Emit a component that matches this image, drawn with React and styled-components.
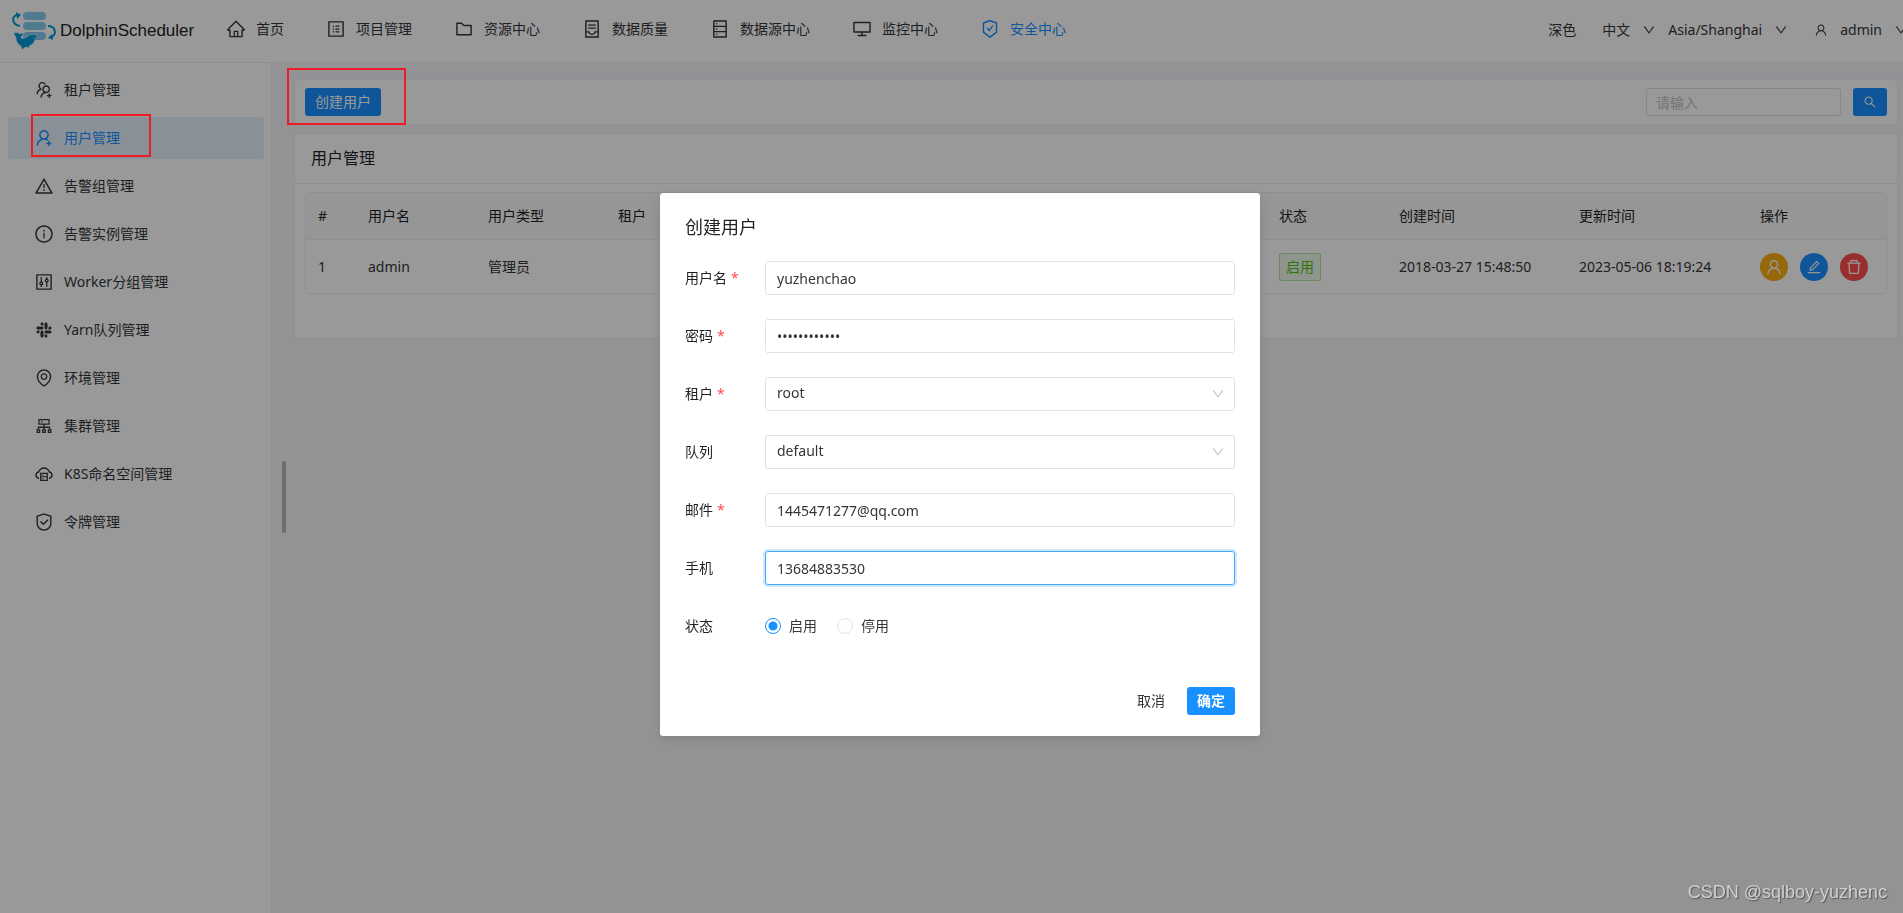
import React, { useState } from 'react';
import styled, { createGlobalStyle, css } from 'styled-components';
import {
   AiOutlineHome,
   AiOutlineProfile,
   AiOutlineFolder,
   AiOutlineContainer,
   AiOutlineDatabase,
   AiOutlineDesktop,
   AiOutlineSafetyCertificate,
   AiOutlineUsergroupAdd,
   AiOutlineUserAdd,
   AiOutlineWarning,
   AiOutlineInfoCircle,
   AiOutlineControl,
   AiOutlineSlack,
   AiOutlineEnvironment,
   AiOutlineCluster,
   AiOutlineCloudServer,
   AiOutlineSafety,
   AiOutlineDown,
   AiOutlineUser,
   AiOutlineEdit,
   AiOutlineDelete,
   AiOutlineSearch
} from 'react-icons/ai';

const colors = {
   primary: '#1890ff',
   text: '#333639',
   title: '#1f2225',
   border: '#e0e0e6',
   divider: '#efeff5',
   marker: '#ed1c24'
};

const GlobalStyle = createGlobalStyle`
   * {
      box-sizing: border-box;
   }

   body {
      margin: 0;
      overflow: hidden;
      color: ${colors.text};
      font-family: "Noto Sans", "Noto Sans CJK SC", sans-serif;
      font-size: 14px;
      line-height: 22px;
   }

   button, input, select {
      font: inherit;
      color: inherit;
   }

   a {
      color: inherit;
      text-decoration: none;
   }

   svg {
      display: block;
      flex-shrink: 0;
   }
`;

const Page = styled.div`
   display: flex;
   flex-direction: column;
   min-height: 100vh;
`;

const Header = styled.header`
   display: flex;
   align-items: center;
   height: 63px;
   padding-bottom: 4px;
   overflow: hidden;
   border-bottom: 1px solid ${colors.divider};
   background: #fff;
`;

const Logo = styled.a`
   display: flex;
   align-items: center;
   gap: 3px;
   width: 226px;
   padding: 3px 0 0 12px;
   flex-shrink: 0;
   color: #222;
   font-family: "Liberation Sans", Arial, sans-serif;
   font-size: 17px;
`;

const Nav = styled.nav`
   display: flex;
   gap: 42px;
`;

const NavLink = styled.a`
   display: flex;
   align-items: center;
   gap: 10px;
   white-space: nowrap;
   ${(props) => props.$active && css`color: ${colors.primary};`}
`;

const Tools = styled.div`
   display: flex;
   align-items: center;
   gap: 12px;
   margin: 2px -5px 0 auto;
`;

const ToolButton = styled.button`
   display: flex;
   align-items: center;
   gap: 12px;
   padding: 0;
   border: 0;
   background: none;
   white-space: nowrap;
   ${(props) => props.$spaced && css`margin-right: 14px;`}
`;

const Body = styled.div`
   display: flex;
   flex: 1;
`;

const Sidebar = styled.nav`
   width: 272px;
   flex-shrink: 0;
   padding: 6px 7px 6px 8px;
   border-right: 1px solid ${colors.divider};
   background: #fff;
`;

const SideLink = styled.a`
   position: relative;
   display: flex;
   align-items: center;
   gap: 10px;
   height: 42px;
   margin-bottom: 6px;
   padding-left: 26px;
   border-radius: 3px;
   ${(props) => props.$active && css`
      color: ${colors.primary};
      background: #e6f1fc;
   `}
`;

const Marker = styled.span`
   position: absolute;
   z-index: 20;
   border: 2px solid ${colors.marker};
   pointer-events: none;
`;

const SideMarker = styled(Marker)`
   inset: -3px 113px 2px 23px;
`;

const ButtonMarker = styled(Marker)`
   inset: -20px -25px -9px -18px;
`;

const Main = styled.main`
   position: relative;
   flex: 1;
   min-width: 0;
   padding: 16px 5px 16px 22px;
   background: #f6f6fa;
`;

const ScrollThumb = styled.span`
   position: absolute;
   top: 398px;
   left: 10px;
   width: 4px;
   height: 72px;
   border-radius: 4px;
   background: rgba(0, 0, 0, 0.25);
`;

const Card = styled.section`
   border: 1px solid ${colors.divider};
   border-radius: 3px;
   background: #fff;
`;

const Toolbar = styled(Card)`
   display: flex;
   align-items: center;
   justify-content: space-between;
   margin-bottom: 8px;
   padding: 8px 10px;
`;

const Anchor = styled.div`
   position: relative;
`;

const Button = styled.button`
   display: flex;
   align-items: center;
   justify-content: center;
   height: 28px;
   padding: 0 10px;
   border: 0;
   border-radius: 3px;
   background: none;
   ${(props) => props.$primary && css`
      color: #fff;
      background: ${colors.primary};
   `}
   ${(props) => props.$strong && css`font-weight: 700;`}
`;

const SearchForm = styled.form`
   display: flex;
   gap: 12px;
`;

const inputCss = css`
   width: 100%;
   height: 34px;
   padding: 0 11px;
   border: 1px solid ${colors.border};
   border-radius: 3px;
   outline: none;
   background: #fff;
`;

const Input = styled.input`
   ${inputCss}
   ${(props) => props.$focused && css`
      border-color: #46a6ff;
      box-shadow: 0 0 0 2px rgba(24, 144, 255, 0.2);
   `}
`;

const SearchInput = styled.input`
   ${inputCss}
   width: 195px;
   height: 28px;
   padding: 0 9px;

   &::placeholder {
      color: #c2c2c2;
   }
`;

const CardTitle = styled.h2`
   margin: 0;
   padding: 12px 16px;
   border-bottom: 1px solid ${colors.divider};
   color: ${colors.title};
   font-size: 16px;
   font-weight: 400;
   line-height: 25px;
`;

const CardContent = styled.div`
   padding: 8px 10px 44px;
`;

const Table = styled.table`
   width: 100%;
   table-layout: fixed;
   border: 1px solid ${colors.divider};
   border-radius: 3px;
   border-spacing: 0;
`;

const HeadCell = styled.th`
   width: ${(props) => props.$width || 'auto'};
   height: 47px;
   padding: 0 12px;
   border-bottom: 1px solid ${colors.divider};
   color: ${colors.title};
   background: #fafafc;
   font-weight: 400;
   text-align: left;
`;

const Cell = styled.td`
   height: 53px;
   padding: 0 12px;
   white-space: nowrap;
`;

const Tag = styled.span`
   display: flex;
   align-items: center;
   width: fit-content;
   height: 28px;
   padding: 0 6px;
   border: 1px solid #b3e59c;
   border-radius: 2px;
   color: #52c41a;
   background: #edf9e8;
`;

const Actions = styled.div`
   display: flex;
   gap: 12px;
`;

const RoundButton = styled.button`
   display: flex;
   align-items: center;
   justify-content: center;
   width: 28px;
   height: 28px;
   padding: 0;
   border: 0;
   border-radius: 50%;
   color: #fff;
   background: ${(props) => props.$color};
`;

const Mask = styled.div`
   position: fixed;
   inset: 0;
   z-index: 10;
   display: flex;
   align-items: center;
   justify-content: center;
   padding: 16px 0 0 17px;
   background: rgba(0, 0, 0, 0.4);
`;

const Modal = styled.form`
   width: 600px;
   padding: 20px 25px 21px;
   border-radius: 3px;
   background: #fff;
   box-shadow: 0 3px 12px rgba(0, 0, 0, 0.1), 0 6px 20px 4px rgba(0, 0, 0, 0.03);
`;

const ModalTitle = styled.h1`
   margin: 0 0 20px;
   color: ${colors.title};
   font-size: 18px;
   font-weight: 400;
   line-height: 28px;
`;

const Field = styled.div`
   display: grid;
   grid-template-columns: 80px 1fr;
   align-items: center;
   min-height: 34px;
   margin-bottom: 24px;
`;

const Label = styled.label`
   color: ${colors.title};
`;

const Required = styled.span`
   margin-left: 4px;
   color: #ff4d4f;
`;

const SelectBox = styled.div`
   position: relative;

   svg {
      position: absolute;
      top: 10px;
      right: 10px;
      color: #c2c2c2;
      pointer-events: none;
   }
`;

const Select = styled.select`
   ${inputCss}
   padding-bottom: 2px;
   appearance: none;
`;

const RadioGroup = styled.div`
   display: flex;
   gap: 20px;
`;

const RadioLabel = styled.label`
   display: flex;
   align-items: center;
   gap: 8px;
`;

const Radio = styled.input`
   appearance: none;
   width: 16px;
   height: 16px;
   margin: 0;
   border: 1px solid ${colors.border};
   border-radius: 50%;

   &:checked {
      border-color: ${colors.primary};
      background: radial-gradient(circle, ${colors.primary} 4px, #fff 5px);
   }
`;

const ModalFooter = styled.div`
   display: flex;
   justify-content: flex-end;
   gap: 12px;
   padding-top: 20px;
`;

const Watermark = styled.div`
   position: fixed;
   right: 16px;
   bottom: 9px;
   z-index: 30;
   color: #d0d0d2;
   font-family: "Liberation Sans", Arial, sans-serif;
   font-size: 18px;
   line-height: 24px;
   text-shadow: 1px 1px 1px #555;
`;

const LogoMark = () => (
   <svg width="45" height="42" viewBox="0 0 45 42" fill="none">
      <g fill="#86cbee">
         <rect x="11" y="2" width="23" height="8" rx="4" />
         <rect x="11" y="12" width="23" height="8" rx="4" />
         <rect x="11" y="22" width="23" height="8" rx="4" />
      </g>
      <g stroke="#009ad8" strokeWidth="2">
         <path d="M8 16C0 15-1 6 5 5" />
         <path d="M36 16c8 0 9 9 3 11" />
      </g>
      <path fill="#009ad8" d="M4 2l5 3-4 4zM40 24l-4 4 5 2z" />
      <path
         fill="#009ad8"
         stroke="#fff"
         strokeWidth="0.5"
         d="M2 23c2-1 5 0 6 1 1-1 3-1 4 1-2 0-3 1-3 3 2 1 4 0 6-1 3-3 7-3 11-1-2 1-2 2-3 4-1 3-3 5-6 6l1 2-4-1c-2 1-3 1-4 3l-1-4C5 34 4 30 4 27c-1-1-2-2-2-4z"
      />
      <circle cx="22" cy="28" r="0.6" fill="#fff" />
   </svg>
);

const navItems = [
   { label: '首页', icon: AiOutlineHome },
   { label: '项目管理', icon: AiOutlineProfile },
   { label: '资源中心', icon: AiOutlineFolder },
   { label: '数据质量', icon: AiOutlineContainer },
   { label: '数据源中心', icon: AiOutlineDatabase },
   { label: '监控中心', icon: AiOutlineDesktop },
   { label: '安全中心', icon: AiOutlineSafetyCertificate, active: true }
];

const sideItems = [
   { label: '租户管理', icon: AiOutlineUsergroupAdd },
   { label: '用户管理', icon: AiOutlineUserAdd, active: true },
   { label: '告警组管理', icon: AiOutlineWarning },
   { label: '告警实例管理', icon: AiOutlineInfoCircle },
   { label: 'Worker分组管理', icon: AiOutlineControl },
   { label: 'Yarn队列管理', icon: AiOutlineSlack },
   { label: '环境管理', icon: AiOutlineEnvironment },
   { label: '集群管理', icon: AiOutlineCluster },
   { label: 'K8S命名空间管理', icon: AiOutlineCloudServer },
   { label: '令牌管理', icon: AiOutlineSafety }
];

const columns = [
   { title: '#', width: '50px' },
   { title: '用户名', width: '120px' },
   { title: '用户类型', width: '130px' },
   { title: '租户' },
   { title: '状态', width: '120px' },
   { title: '创建时间', width: '180px' },
   { title: '更新时间', width: '181px' },
   { title: '操作', width: '138px' }
];

const users = [
   {
      id: 1,
      name: 'admin',
      type: '管理员',
      tenant: '',
      state: '启用',
      createTime: '2018-03-27 15:48:50',
      updateTime: '2023-05-06 18:19:24'
   }
];

const TextField = ({ id, label, required, children }) => (
   <Field>
      <Label htmlFor={id}>
         {label}
         {required && <Required>*</Required>}
      </Label>
      {children}
   </Field>
);

const UserTable = () => (
   <Table>
      <thead>
         <tr>
            {columns.map((column) =>
               <HeadCell key={column.title} $width={column.width}>{column.title}</HeadCell>
            )}
         </tr>
      </thead>
      <tbody>
         {users.map((user) =>
            <tr key={user.id}>
               <Cell>{user.id}</Cell>
               <Cell>{user.name}</Cell>
               <Cell>{user.type}</Cell>
               <Cell>{user.tenant}</Cell>
               <Cell><Tag>{user.state}</Tag></Cell>
               <Cell>{user.createTime}</Cell>
               <Cell>{user.updateTime}</Cell>
               <Cell>
                  <Actions>
                     <RoundButton type="button" $color="#faad14" aria-label="授权"><AiOutlineUser size={18} /></RoundButton>
                     <RoundButton type="button" $color={colors.primary} aria-label="编辑"><AiOutlineEdit size={16} /></RoundButton>
                     <RoundButton type="button" $color="#ff4d4f" aria-label="删除"><AiOutlineDelete size={18} /></RoundButton>
                  </Actions>
               </Cell>
            </tr>
         )}
      </tbody>
   </Table>
);

const UserModal = () => {
   const [form, setForm] = useState({
      name: 'yuzhenchao',
      password: 'yuzhenchao12',
      tenant: 'root',
      queue: 'default',
      email: '1445471277@qq.com',
      phone: '13684883530',
      state: '1'
   });

   const bind = (key) => ({
      id: key,
      value: form[key],
      onChange: (e) => setForm({ ...form, [key]: e.target.value })
   });

   const bindState = (value) => ({
      type: 'radio',
      name: 'state',
      checked: form.state === value,
      onChange: () => setForm({ ...form, state: value })
   });

   return (
      <Mask>
         <Modal role="dialog" aria-labelledby="modal-title" onSubmit={(e) => e.preventDefault()}>
            <ModalTitle id="modal-title">创建用户</ModalTitle>
            <TextField id="name" label="用户名" required>
               <Input {...bind('name')} />
            </TextField>
            <TextField id="password" label="密码" required>
               <Input type="password" autoComplete="off" {...bind('password')} />
            </TextField>
            <TextField id="tenant" label="租户" required>
               <SelectBox>
                  <Select {...bind('tenant')}>
                     <option>root</option>
                  </Select>
                  <AiOutlineDown size={14} />
               </SelectBox>
            </TextField>
            <TextField id="queue" label="队列">
               <SelectBox>
                  <Select {...bind('queue')}>
                     <option>default</option>
                  </Select>
                  <AiOutlineDown size={14} />
               </SelectBox>
            </TextField>
            <TextField id="email" label="邮件" required>
               <Input {...bind('email')} />
            </TextField>
            <TextField id="phone" label="手机">
               <Input $focused {...bind('phone')} />
            </TextField>
            <Field role="radiogroup" aria-labelledby="state-label">
               <Label as="span" id="state-label">状态</Label>
               <RadioGroup>
                  <RadioLabel><Radio {...bindState('1')} />启用</RadioLabel>
                  <RadioLabel><Radio {...bindState('0')} />停用</RadioLabel>
               </RadioGroup>
            </Field>
            <ModalFooter>
               <Button type="button">取消</Button>
               <Button type="submit" $primary $strong>确定</Button>
            </ModalFooter>
         </Modal>
      </Mask>
   );
};

const App = () => (
   <Page>
      <GlobalStyle />
      <Header>
         <Logo href="#">
            <LogoMark />
            DolphinScheduler
         </Logo>
         <Nav>
            {navItems.map(({ label, icon: Icon, active }) =>
               <NavLink key={label} href="#" $active={active}>
                  <Icon size={20} />
                  {label}
               </NavLink>
            )}
         </Nav>
         <Tools>
            <ToolButton type="button" $spaced>深色</ToolButton>
            <ToolButton type="button">中文<AiOutlineDown size={14} /></ToolButton>
            <ToolButton type="button" $spaced>Asia/Shanghai<AiOutlineDown size={14} /></ToolButton>
            <ToolButton type="button"><AiOutlineUser size={14} />admin<AiOutlineDown size={14} /></ToolButton>
         </Tools>
      </Header>
      <Body>
         <Sidebar>
            {sideItems.map(({ label, icon: Icon, active }) =>
               <SideLink key={label} href="#" $active={active}>
                  <Icon size={20} />
                  {label}
                  {active && <SideMarker />}
               </SideLink>
            )}
         </Sidebar>
         <Main>
            <ScrollThumb />
            <Toolbar>
               <Anchor>
                  <Button type="button" $primary>创建用户</Button>
                  <ButtonMarker />
               </Anchor>
               <SearchForm onSubmit={(e) => e.preventDefault()}>
                  <SearchInput aria-label="搜索" placeholder="请输入" />
                  <Button type="submit" $primary aria-label="搜索"><AiOutlineSearch size={14} /></Button>
               </SearchForm>
            </Toolbar>
            <Card>
               <CardTitle>用户管理</CardTitle>
               <CardContent>
                  <UserTable />
               </CardContent>
            </Card>
         </Main>
      </Body>
      <UserModal />
      <Watermark>CSDN @sqlboy-yuzhenc</Watermark>
   </Page>
);

export default App;
